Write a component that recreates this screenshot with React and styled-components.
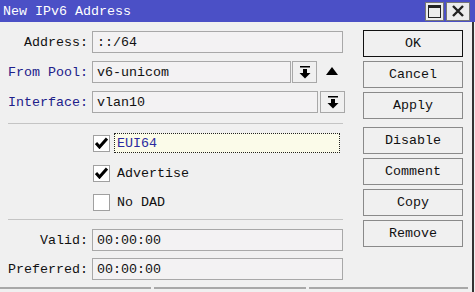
import React from 'react';
import styled, { createGlobalStyle } from 'styled-components';

const GlobalStyle = createGlobalStyle`
  html, body {
    margin: 0;
    padding: 0;
    background: #f0f0f0;
  }
  * { box-sizing: border-box; }
`;

const mono = `"Liberation Mono", "DejaVu Sans Mono", monospace`;

const Window = styled.div`
  width: 475px;
  height: 292px;
  display: flex;
  flex-direction: column;
  background: #f0f0f0;
  font-family: ${mono};
  font-size: 13.33px;
  color: #111;
  overflow: hidden;
`;

const TitleBar = styled.div`
  height: 22px;
  background: #4b50c6;
  display: flex;
  align-items: center;
  padding-left: 3px;
  color: #fff;
  font-size: 13.33px;
`;

const Title = styled.span`
  flex: 1;
`;

const TitleButton = styled.div`
  width: ${p => p.$w}px;
  height: 19px;
  margin-right: ${p => p.$mr}px;
  background: #ececec;
  border: 1px solid #777;
  display: flex;
  align-items: center;
  justify-content: center;
`;

const Body = styled.div`
  flex: 1;
  display: flex;
  border-right: 2px solid #333;
  margin-right: 1px;
`;

const Form = styled.div`
  width: 352px;
  padding: 9px 0 0 8px;
  display: flex;
  flex-direction: column;
`;

const Row = styled.div`
  display: flex;
  align-items: center;
  height: 22px;
  margin-bottom: ${p => p.$mb ?? 8}px;
`;

const Label = styled.div`
  width: 84px;
  text-align: right;
  padding-right: 4px;
  color: ${p => (p.$blue ? '#20208a' : '#111')};
  white-space: nowrap;
`;

const Input = styled.div`
  width: ${p => p.$w}px;
  height: 22px;
  background: #f3f2f3;
  border: 1px solid #a8a8a8;
  padding-left: 4px;
  display: flex;
  align-items: center;
  color: #111;
`;

const DropButton = styled.div`
  width: 25px;
  height: 22px;
  margin-left: ${p => p.$ml}px;
  border: 1px solid #a8a8a8;
  background: #f0f0f0;
  display: flex;
  align-items: center;
  justify-content: center;
`;

const UpArrow = styled.div`
  margin-left: 9px;
  width: 0;
  height: 0;
  border-left: 6px solid transparent;
  border-right: 6px solid transparent;
  border-bottom: 8px solid #000;
  margin-top: -2px;
`;

const Separator = styled.div`
  width: 335px;
  height: 1px;
  background: #c4c4c4;
  margin: ${p => p.$m};
`;

const CheckRow = styled.div`
  display: flex;
  align-items: center;
  height: 20px;
  padding-left: 85px;
  margin-bottom: ${p => p.$mb ?? 10}px;
`;

const Box = styled.div`
  width: 17px;
  height: 17px;
  background: #fff;
  border: 1px solid #a0a0a0;
  display: flex;
  align-items: center;
  justify-content: center;
`;

const CheckLabel = styled.div`
  margin-left: ${p => (p.$focus ? 4 : 7)}px;
  padding-left: ${p => (p.$focus ? 2 : 0)}px;
  height: 20px;
  display: flex;
  align-items: center;
  color: ${p => (p.$focus ? '#2a2aa0' : '#111')};
  ${p =>
    p.$focus &&
    `
    width: 226px;
    border: 1px dotted #222;
    background: #fbfbe9;
  `}
`;

const Buttons = styled.div`
  padding: 8px 0 0 11px;
  display: flex;
  flex-direction: column;
  gap: 4px;
`;

const Button = styled.div`
  width: 100px;
  height: 27px;
  border: 1px solid ${p => (p.$default ? '#111' : '#8a8a8a')};
  background: #f0f0f0;
  display: flex;
  align-items: center;
  justify-content: center;
  margin-top: ${p => p.$mt ?? 0}px;
`;

const StatusBar = styled.div`
  height: 8px;
  display: flex;
  gap: 3px;
  padding-right: 4px;
  border-right: 2px solid #333;
  margin-right: 1px;
`;

const StatusCell = styled.div`
  width: ${p => p.$w}px;
  border-top: 2px solid #a8a8a8;
  margin-top: 3px;
`;

const DropIcon = () => (
  <svg width="12" height="14" viewBox="0 0 12 14">
    <rect x="1" y="1" width="10" height="1.5" fill="#000" />
    <rect x="4" y="4" width="4" height="4" fill="#000" />
    <polygon points="0.5,8 11.5,8 6,13.5" fill="#000" />
  </svg>
);

const Check = () => (
  <svg width="13" height="12" viewBox="0 0 13 12">
    <path d="M1 6 L4.5 10 L12 1.5" stroke="#000" strokeWidth="3" fill="none" />
  </svg>
);

export default function App() {
  return (
    <>
      <GlobalStyle />
      <Window>
        <TitleBar>
          <Title>New IPv6 Address</Title>
          <TitleButton $w={19} $mr={2}>
            <svg width="13" height="13" viewBox="0 0 13 13">
              <rect x="0.5" y="0.5" width="12" height="12" fill="none" stroke="#222" />
              <rect x="0" y="0" width="13" height="3" fill="#222" />
            </svg>
          </TitleButton>
          <TitleButton $w={24} $mr={5}>
            <svg width="12" height="12" viewBox="0 0 12 12">
              <path d="M1 1 L11 11 M11 1 L1 11" stroke="#222" strokeWidth="2.4" />
            </svg>
          </TitleButton>
        </TitleBar>
        <Body>
          <Form>
            <Row>
              <Label>Address:</Label>
              <Input $w={251}>::/64</Input>
            </Row>
            <Row>
              <Label $blue>From Pool:</Label>
              <Input $w={199}>v6-unicom</Input>
              <DropButton $ml={1}>
                <DropIcon />
              </DropButton>
              <UpArrow />
            </Row>
            <Row $mb={10}>
              <Label $blue>Interface:</Label>
              <Input $w={226}>vlan10</Input>
              <DropButton $ml={2}>
                <DropIcon />
              </DropButton>
            </Row>
            <Separator $m="0 0 9px 0" />
            <CheckRow>
              <Box>
                <Check />
              </Box>
              <CheckLabel $focus>EUI64</CheckLabel>
            </CheckRow>
            <CheckRow $mb={9}>
              <Box>
                <Check />
              </Box>
              <CheckLabel>Advertise</CheckLabel>
            </CheckRow>
            <CheckRow $mb={7}>
              <Box />
              <CheckLabel>No DAD</CheckLabel>
            </CheckRow>
            <Separator $m="0 0 9px 0" />
            <Row $mb={7}>
              <Label>Valid:</Label>
              <Input $w={251}>00:00:00</Input>
            </Row>
            <Row $mb={0}>
              <Label>Preferred:</Label>
              <Input $w={251}>00:00:00</Input>
            </Row>
          </Form>
          <Buttons>
            <Button $default>OK</Button>
            <Button>Cancel</Button>
            <Button>Apply</Button>
            <Button $mt={4}>Disable</Button>
            <Button>Comment</Button>
            <Button>Copy</Button>
            <Button>Remove</Button>
          </Buttons>
        </Body>
        <StatusBar>
          <StatusCell $w={152} />
          <StatusCell $w={152} />
          <StatusCell $w={160} />
        </StatusBar>
      </Window>
    </>
  );
}
